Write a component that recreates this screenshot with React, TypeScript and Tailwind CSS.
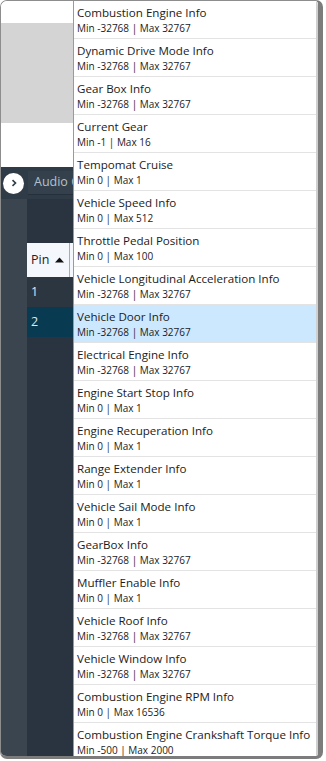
import React from 'react';

type Signal = { name: string; min: number; max: number };

const signals: Signal[] = [
  { name: 'Combustion Engine Info', min: -32768, max: 32767 },
  { name: 'Dynamic Drive Mode Info', min: -32768, max: 32767 },
  { name: 'Gear Box Info', min: -32768, max: 32767 },
  { name: 'Current Gear', min: -1, max: 16 },
  { name: 'Tempomat Cruise', min: 0, max: 1 },
  { name: 'Vehicle Speed Info', min: 0, max: 512 },
  { name: 'Throttle Pedal Position', min: 0, max: 100 },
  { name: 'Vehicle Longitudinal Acceleration Info', min: -32768, max: 32767 },
  { name: 'Vehicle Door Info', min: -32768, max: 32767 },
  { name: 'Electrical Engine Info', min: -32768, max: 32767 },
  { name: 'Engine Start Stop Info', min: 0, max: 1 },
  { name: 'Engine Recuperation Info', min: 0, max: 1 },
  { name: 'Range Extender Info', min: 0, max: 1 },
  { name: 'Vehicle Sail Mode Info', min: 0, max: 1 },
  { name: 'GearBox Info', min: -32768, max: 32767 },
  { name: 'Muffler Enable Info', min: 0, max: 1 },
  { name: 'Vehicle Roof Info', min: -32768, max: 32767 },
  { name: 'Vehicle Window Info', min: -32768, max: 32767 },
  { name: 'Combustion Engine RPM Info', min: 0, max: 16536 },
  { name: 'Combustion Engine Crankshaft Torque Info', min: -500, max: 2000 },
];

const SELECTED = 'Vehicle Door Info';

const font = { fontFamily: '"Open Sans", "Noto Sans", sans-serif' };

const SignalItem: React.FC<{ signal: Signal; selected: boolean }> = ({ signal, selected }) => (
  <div
    className={`h-[38px] shrink-0 border-b border-[#e3e3e3] pl-[3px] pt-[4px] text-[#1b1b1b] ${
      selected ? 'bg-[#cce8ff]' : 'bg-white'
    }`}
  >
    <div className="text-[11.6px] leading-[16px] whitespace-nowrap">{signal.name}</div>
    <div className="text-[10px] leading-[15px] whitespace-nowrap">
      Min {signal.min} | Max {signal.max}
    </div>
  </div>
);

export default function App() {
  return (
    <div className="w-[326px] h-[761px] bg-white relative" style={font}>
      <div className="w-[323px] h-[759px] rounded-[7px] border-l border-t border-[#8d8d8d] border-r-[5px] border-r-[#7c7c7c] border-b-[3px] border-b-[#7c7c7c] overflow-hidden relative flex flex-col">
        {/* background app, mostly hidden behind the list */}
        <div className="h-[22px] bg-white shrink-0" />
        <div className="h-[100px] bg-[#d4d4d4] shrink-0" />
        <div className="h-[44px] bg-white shrink-0" />
        <div className="h-[32px] bg-[#2f3b47] shrink-0 flex items-center">
          <div className="ml-[2px] w-[21px] h-[21px] shrink-0 rounded-full bg-white flex items-center justify-center">
            <svg width="8" height="8" viewBox="0 0 8 8">
              <path d="M2.5 1.2 L5.5 4 L2.5 6.8" fill="none" stroke="#2f3b47" strokeWidth="1.6" />
            </svg>
          </div>
          <div className="ml-[4px] w-[45px] h-[24px] pl-[6px] bg-[#34414d] border-b border-[#25303a] flex items-center overflow-hidden">
            <span className="w-[39px] overflow-hidden text-[12.5px] text-[#b7c0c9] whitespace-nowrap">Audio C</span>
          </div>
        </div>
        <div className="flex-1 flex">
          <div className="w-[26px] bg-[#3a4550] shrink-0" />
          <div className="flex-1 bg-[#2a3440] pt-[44px] overflow-hidden">
            <div className="h-[34px] bg-[#f4f8fd] flex items-center text-[12.5px] text-[#222] whitespace-nowrap">
              <span className="pl-[4px] w-[42px] flex items-center">
                Pin
                <svg width="9" height="6" viewBox="0 0 9 6" className="ml-[6px]">
                  <path d="M0 5.5 L4.5 0.5 L9 5.5 Z" fill="#111" />
                </svg>
              </span>
              <span className="w-[3px] h-full border-l border-[#e0a060]" />
            </div>
            <div className="h-[30px] bg-[#2c3640] flex items-center text-[12.5px] text-[#e3e8ee] whitespace-nowrap">
              <span className="pl-[4px] w-[42px]">1</span>
            </div>
            <div className="h-[30px] bg-[#083a52] flex items-center text-[12.5px] text-[#e3e8ee] whitespace-nowrap">
              <span className="pl-[4px] w-[42px]">2</span>
            </div>
          </div>
        </div>

        {/* dropdown list overlay */}
        <div className="absolute left-[72px] top-0 bottom-0 right-0 bg-white border-l border-[#9a9a9a] border-r-2 border-r-[#cfcfcf] flex flex-col overflow-hidden">
          {signals.map((s) => (
            <SignalItem key={s.name} signal={s} selected={s.name === SELECTED} />
          ))}
        </div>
      </div>
    </div>
  );
}
